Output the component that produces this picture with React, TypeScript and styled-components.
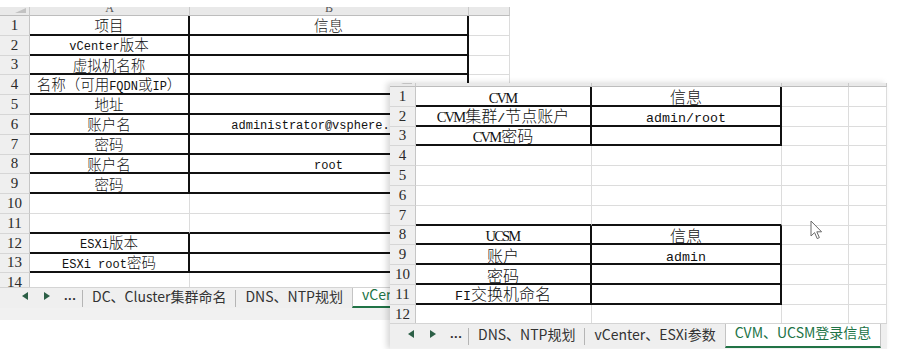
import React from 'react';
import styled, { createGlobalStyle } from 'styled-components';

const GlobalStyle = createGlobalStyle`
  html, body {
    margin: 0;
    padding: 0;
    background: #fff;
  }
  body {
    font-family: "Noto Sans CJK SC", "Liberation Sans", sans-serif;
  }
`;

// the two excel windows sit on a free canvas, like windows on a desktop
const Desktop = styled.div`
  position: relative;
  width: 902px;
  height: 349px;
  overflow: hidden;
  background: #fff;
`;

const Window = styled.div<{ $x: number; $y: number; $w: number; $h: number; $shadow?: boolean }>`
  position: absolute;
  left: ${p => p.$x}px;
  top: ${p => p.$y}px;
  width: ${p => p.$w}px;
  height: ${p => p.$h}px;
  display: flex;
  flex-direction: column;
  background: #fff;
  overflow: hidden;
  ${p => (p.$shadow ? 'box-shadow: -3px 0 6px rgba(0, 0, 0, 0.16);' : '')}
`;

const TopStrip = styled.div<{ $h: number }>`
  height: ${p => p.$h}px;
  flex: none;
  background: #fff;
`;

const Grid = styled.div<{ $cols: string; $head: number; $rh: number; $rows: number; $h: number }>`
  display: grid;
  grid-template-columns: ${p => p.$cols};
  grid-template-rows: ${p => p.$head}px repeat(${p => p.$rows}, ${p => p.$rh}px);
  height: ${p => p.$h}px;
  flex: none;
  overflow: hidden;
`;

const ColHead = styled.div<{ $corner?: boolean }>`
  position: relative;
  background: #e9e9e9;
  border-right: 1px solid #c9c9c9;
  border-bottom: 1px solid #bdbdbd;
  overflow: hidden;
  display: flex;
  justify-content: center;
  font-family: "Liberation Serif", serif;
  font-size: 12px;
  line-height: 12px;
  color: #555;

  span {
    margin-top: -5px;
  }

  ${p =>
    p.$corner
      ? `&::after {
    content: '';
    position: absolute;
    right: 3px;
    bottom: 2px;
    border-left: 11px solid transparent;
    border-bottom: 5px solid #c2c2c2;
  }`
      : ''}
`;

const RowHead = styled.div<{ $size: number }>`
  background: #efefef;
  border-right: 1px solid #c6c6c6;
  border-bottom: 1px solid #d6d6d6;
  display: flex;
  align-items: center;
  justify-content: center;
  font-family: "Liberation Serif", serif;
  font-size: ${p => p.$size}px;
  color: #2a2a2a;
`;

const Cell = styled.div<{ $thickR?: boolean; $thickB?: boolean; $size: number }>`
  display: flex;
  align-items: center;
  justify-content: center;
  border-right: ${p => (p.$thickR ? '2px solid #111' : '1px solid #dcdcdc')};
  border-bottom: ${p => (p.$thickB ? '2px solid #111' : '1px solid #dcdcdc')};
  font-family: "Noto Sans CJK SC", sans-serif;
  font-weight: 300;
  font-size: ${p => p.$size}px;
  color: #111;
  white-space: nowrap;
  min-width: 0;
`;

const Inner = styled.span`
  display: inline-block;
  line-height: 1;
  padding-top: 1px;
`;

const Latin = styled.span<{ $size: number }>`
  font-family: "Liberation Mono", monospace;
  font-weight: normal;
  font-size: ${p => p.$size}px;
`;

const Narrow = styled.span`
  font-family: "Liberation Serif", serif;
  font-weight: normal;
  font-size: 14.5px;
  letter-spacing: -1.8px;
  margin-right: 1px;
`;

const TabBar = styled.div<{ $h: number }>`
  height: ${p => p.$h}px;
  flex: none;
  display: flex;
  align-items: stretch;
  background: #efefef;
  border-top: 1px solid #d4d4d4;
  font-family: "Noto Sans CJK SC", "Liberation Sans", sans-serif;
  font-size: 14px;
  color: #333;
  white-space: nowrap;
  overflow: hidden;
`;

const Nav = styled.div<{ $pl: number; $w: number }>`
  width: ${p => p.$w}px;
  flex: none;
  display: flex;
  align-items: center;
  padding-left: ${p => p.$pl}px;
  gap: 16px;
  box-sizing: border-box;
`;

const Dots = styled.span`
  font-family: "Liberation Sans", sans-serif;
  font-weight: bold;
  font-size: 13px;
  color: #333;
  letter-spacing: 0.5px;
  margin-left: -2px;
`;

const Sep = styled.div`
  width: 1px;
  flex: none;
  align-self: center;
  height: 17px;
  background: #b5b5b5;
`;

const Tab = styled.div<{ $active?: boolean; $lift: number }>`
  display: flex;
  align-items: center;
  padding: 0 9px ${p => p.$lift}px;
  ${p =>
    p.$active
      ? `background: #fff;
  color: #217346;
  border-left: 1px solid #c4c4c4;
  border-right: 1px solid #c4c4c4;
  border-bottom: 2px solid #217346;
  margin-top: -1px;`
      : ''}
`;

const StatusStrip = styled.div`
  flex: 1;
  background: #f1f1f1;
`;

const Cursor = styled.svg`
  position: absolute;
  left: 810px;
  top: 220px;
`;

type Row = {
  a?: React.ReactNode;
  b?: React.ReactNode;
  boxed?: boolean;
  under?: boolean;
};

const mix = (v: React.ReactNode, latin: number) =>
  typeof v === 'string'
    ? v
        .split(/([\x20-\x7e]+)/)
        .filter(Boolean)
        .map((s, i) =>
          /^[\x20-\x7e]+$/.test(s) ? (
            <Latin key={i} $size={latin}>
              {s}
            </Latin>
          ) : (
            <React.Fragment key={i}>{s}</React.Fragment>
          )
        )
    : v;

type SheetProps = {
  cols: number[];
  head: number;
  height: number;
  heads: string[];
  rows: Row[];
  cjk: number;
  latin: number;
  num: number;
};

const Sheet = ({ cols, head, height, heads, rows, cjk, latin, num }: SheetProps) => {
  const extra = cols.length - 3;
  return (
    <Grid $cols={cols.map(c => c + 'px').join(' ')} $head={head} $rh={19.8} $rows={rows.length} $h={height}>
      <ColHead $corner />
      {heads.map((h, i) => (
        <ColHead key={i}>
          <span>{h}</span>
        </ColHead>
      ))}
      {rows.map((r, i) => (
        <React.Fragment key={i}>
          <RowHead $size={num}>{i + 1}</RowHead>
          <Cell $size={cjk} $thickR={r.boxed} $thickB={r.boxed || r.under}>
            <Inner>{mix(r.a, latin)}</Inner>
          </Cell>
          <Cell $size={cjk} $thickR={r.boxed} $thickB={r.boxed || r.under}>
            <Inner>{mix(r.b, latin)}</Inner>
          </Cell>
          {Array.from({ length: extra }).map((_, k) => (
            <Cell key={k} $size={cjk} />
          ))}
        </React.Fragment>
      ))}
    </Grid>
  );
};

const Arrow = ({ dir }: { dir: 'l' | 'r' }) => (
  <svg width="6" height="8" viewBox="0 0 6 8">
    <polygon points={dir === 'l' ? '6,0 6,8 0,4' : '0,0 0,8 6,4'} fill="#2c5f46" />
  </svg>
);

type BarProps = {
  h: number;
  lift: number;
  navPl: number;
  navW: number;
  tabs: string[];
  active: string;
};

const SheetTabs = ({ h, lift, navPl, navW, tabs, active }: BarProps) => (
  <TabBar $h={h}>
    <Nav $pl={navPl} $w={navW} style={{ paddingBottom: lift }}>
      <Arrow dir="l" />
      <Arrow dir="r" />
      <Dots>...</Dots>
    </Nav>
    {tabs.map(t => (
      <React.Fragment key={t}>
        <Sep />
        <Tab $lift={lift}>{t}</Tab>
      </React.Fragment>
    ))}
    <Tab $active $lift={lift}>
      {active}
    </Tab>
  </TabBar>
);

const leftRows: Row[] = [
  { a: '项目', b: '信息', boxed: true },
  { a: 'vCenter版本', boxed: true },
  { a: '虚拟机名称', boxed: true },
  { a: '名称（可用FQDN或IP）', boxed: true },
  { a: '地址', boxed: true },
  { a: '账户名', b: 'administrator@vsphere.local', boxed: true },
  { a: '密码', boxed: true },
  { a: '账户名', b: 'root', boxed: true },
  { a: '密码', boxed: true },
  {},
  { under: true },
  { a: 'ESXi版本', boxed: true },
  { a: 'ESXi root密码', boxed: true },
  {},
];

const rightRows: Row[] = [
  { a: <Narrow>CVM</Narrow>, b: '信息', boxed: true },
  {
    a: (
      <>
        <Narrow>CVM</Narrow>集群<Latin $size={13.3}>/</Latin>节点账户
      </>
    ),
    b: 'admin/root',
    boxed: true,
  },
  {
    a: (
      <>
        <Narrow>CVM</Narrow>密码
      </>
    ),
    boxed: true,
  },
  {},
  {},
  {},
  { under: true },
  { a: <Narrow>UCSM</Narrow>, b: '信息', boxed: true },
  { a: '账户', b: 'admin', boxed: true },
  { a: '密码', boxed: true },
  { a: 'FI交换机命名', boxed: true },
  {},
];

const App: React.FC = () => {
  return (
    <>
      <GlobalStyle />
      <Desktop>
        {/* 后面的窗口：vCenter、ESXi参数 */}
        <Window $x={0} $y={0} $w={510} $h={320}>
          <TopStrip $h={7} />
          <Sheet
            cols={[30, 160, 279, 41]}
            head={9}
            height={280}
            heads={['A', 'B', '']}
            rows={leftRows}
            cjk={14.5}
            latin={12}
            num={15}
          />
          <SheetTabs
            h={20}
            lift={5}
            navPl={22}
            navW={82}
            tabs={['DC、Cluster集群命名', 'DNS、NTP规划']}
            active="vCenter、ESXi参数"
          />
          <StatusStrip />
        </Window>

        {/* 前面的窗口：CVM、UCSM登录信息 */}
        <Window $x={390} $y={83} $w={497} $h={266} $shadow>
          <Sheet
            cols={[26, 176, 190, 67, 38]}
            head={4}
            height={240}
            heads={['', '', '', '']}
            rows={rightRows}
            cjk={16}
            latin={13.3}
            num={15}
          />
          <SheetTabs
            h={24}
            lift={5}
            navPl={18}
            navW={78}
            tabs={['DNS、NTP规划', 'vCenter、ESXi参数']}
            active="CVM、UCSM登录信息"
          />
          <StatusStrip />
        </Window>

        <Cursor width="13" height="20" viewBox="0 0 13 20">
          <path
            d="M1 1 L1 16 L4.6 12.6 L7.2 18.6 L9.4 17.6 L6.8 11.8 L11.6 11.8 Z"
            fill="#fff"
            stroke="#6a6a6a"
            strokeWidth="1"
            strokeLinejoin="round"
          />
        </Cursor>
      </Desktop>
    </>
  );
};

export default App;
